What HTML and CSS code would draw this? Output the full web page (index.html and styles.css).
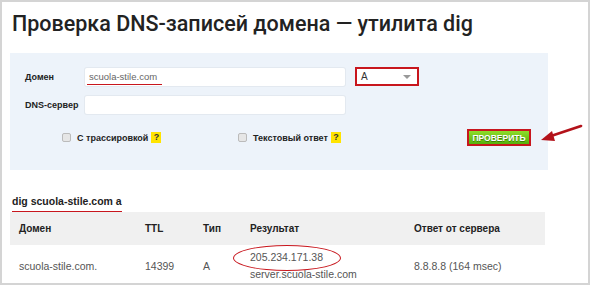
FILE: index.html
```html
<!DOCTYPE html>
<html lang="ru">
<head>
  <meta charset="UTF-8">
  <title>Проверка DNS-записей домена — утилита dig</title>
  <link rel="stylesheet" href="styles.css">
</head>
<body>
<div class="frame">
    <h1 class="title">Проверка DNS-записей домена — утилита dig</h1>

    <div class="panel">
        <div class="row">
            <label class="label">Домен</label>
            <div class="input marked">
                <span class="value">scuola-stile.com</span>
                <span class="underline"></span>
            </div>
            <div class="select">
                <span>A</span>
                <span class="caret"></span>
            </div>
        </div>
        <div class="row">
            <label class="label">DNS-сервер</label>
            <div class="input"></div>
        </div>
        <div class="options">
            <div class="option first">
                <span class="check"></span>
                <span class="opt-text">С трассировкой</span>
                <span class="help">?</span>
            </div>
            <div class="option second">
                <span class="check"></span>
                <span class="opt-text">Текстовый ответ</span>
                <span class="help">?</span>
            </div>
            <button class="submit">ПРОВЕРИТЬ</button>
            <svg class="arrow" width="46" height="24" viewBox="0 0 46 24">
                <path d="M42 5 L12 15" stroke="#b3121a" stroke-width="2.6" stroke-linecap="round" fill="none"/>
                <path d="M2 19 L13 10 L16 20 Z" fill="#b3121a"/>
            </svg>
        </div>
    </div>

    <div class="result">
        <div class="cmd">dig scuola-stile.com a</div>
        <table>
            <tr>
                <th class="c1">Домен</th>
                <th class="c2">TTL</th>
                <th class="c3">Тип</th>
                <th class="c4">Результат</th>
                <th>Ответ от сервера</th>
            </tr>
            <tr>
                <td>scuola-stile.com.</td>
                <td>14399</td>
                <td>A</td>
                <td class="answer">
                    <div>205.234.171.38</div>
                    <div>server.scuola-stile.com</div>
                    <span class="ring"></span>
                </td>
                <td>8.8.8.8 (164 msec)</td>
            </tr>
        </table>
    </div>
</div>
</body>
</html>
```

FILE: styles.css
```css
body {
    margin: 0;
    font-family: "Liberation Sans", Arial, sans-serif;
    background: #fff;
}
.frame {
    width: 590px;
    height: 285px;
    box-sizing: border-box;
    border: 2px solid #d4d4d4;
    padding: 0 40px 0 8px;
    overflow: hidden;
}
.title {
    margin: 0;
    padding: 9px 0 0 2px;
    height: 51px;
    box-sizing: border-box;
    font-family: Roboto, sans-serif;
    font-weight: 500;
    font-size: 21.5px;
    line-height: 26px;
    color: #222;
}
.panel {
    background-color: #edf3fa;
    padding: 14px 0 0 15px;
    height: 117px;
    box-sizing: border-box;
}
.row {
    display: flex;
    align-items: center;
    margin-bottom: 10px;
}
.label {
    width: 60px;
    flex-shrink: 0;
    font-size: 9px;
    font-weight: bold;
    color: #222;
    white-space: nowrap;
}
.input {
    position: relative;
    width: 260px;
    height: 18px;
    background: #fff;
    border-radius: 2px;
    box-shadow: 0 0 0 1px #e3e9f0;
}
.value {
    display: block;
    padding: 3px 0 0 4px;
    font-size: 9.5px;
    color: #666;
}
.underline {
    position: absolute;
    left: 2px;
    top: 16px;
    width: 75px;
    height: 1px;
    background: #c8161d;
}
.select {
    display: flex;
    align-items: center;
    justify-content: space-between;
    margin-left: 10px;
    width: 64px;
    height: 19px;
    box-sizing: border-box;
    border: 2px solid #c8161d;
    background: #fff;
    padding: 0 6px 0 4px;
    font-size: 10px;
    color: #333;
}
.caret {
    width: 0;
    height: 0;
    border-left: 4px solid transparent;
    border-right: 4px solid transparent;
    border-top: 4px solid #999;
}
.options {
    position: relative;
    display: flex;
    align-items: center;
    margin-top: 15px;
}
.option {
    display: flex;
    align-items: center;
    flex-shrink: 0;
    white-space: nowrap;
    font-size: 9px;
    font-weight: bold;
    color: #222;
}
.first {
    margin-left: 37px;
    width: 176px;
}
.check {
    width: 7px;
    height: 7px;
    border: 1px solid #bbb;
    border-radius: 2px;
    background: #e6e6e6;
    margin-right: 6px;
}
.help {
    margin-left: 3px;
    width: 10px;
    height: 11px;
    background: #ffe400;
    font-size: 9px;
    line-height: 11px;
    text-align: center;
    color: #333;
}
.submit {
    margin-left: auto;
    margin-right: 17px;
    flex-shrink: 0;
    width: 64px;
    height: 17px;
    padding: 0;
    border: 2px solid #c8161d;
    background: linear-gradient(#8edc2a, #55b10c);
    color: #fff;
    font-family: "Liberation Sans", Arial, sans-serif;
    font-size: 8.5px;
    font-weight: bold;
    text-shadow: 0 1px 0 #3d7f06;
}
.arrow {
    position: absolute;
    right: -37px;
    top: -8px;
}
.result {
    padding-top: 21px;
}
.cmd {
    display: inline-block;
    margin-left: 2px;
    padding-bottom: 3px;
    border-bottom: 1px solid #c8161d;
    font-size: 10.5px;
    line-height: 13px;
    font-weight: bold;
    color: #222;
}
table {
    width: 535px;
    border-collapse: collapse;
}
th {
    background: #f0f0f0;
    height: 33px;
    padding: 0 0 0 9px;
    text-align: left;
    font-size: 10px;
    color: #222;
}
td {
    padding: 4px 0 4px 9px;
    font-size: 10.5px;
    line-height: 17px;
    color: #555;
    vertical-align: middle;
}
.c1 { width: 117px; }
.c2 { width: 49px; }
.c3 { width: 38px; }
.c4 { width: 155px; }
.answer {
    position: relative;
}
.ring {
    position: absolute;
    left: -8px;
    top: 0;
    width: 106px;
    height: 24px;
    border: 1.5px solid #c8161d;
    border-radius: 50%;
}
```
